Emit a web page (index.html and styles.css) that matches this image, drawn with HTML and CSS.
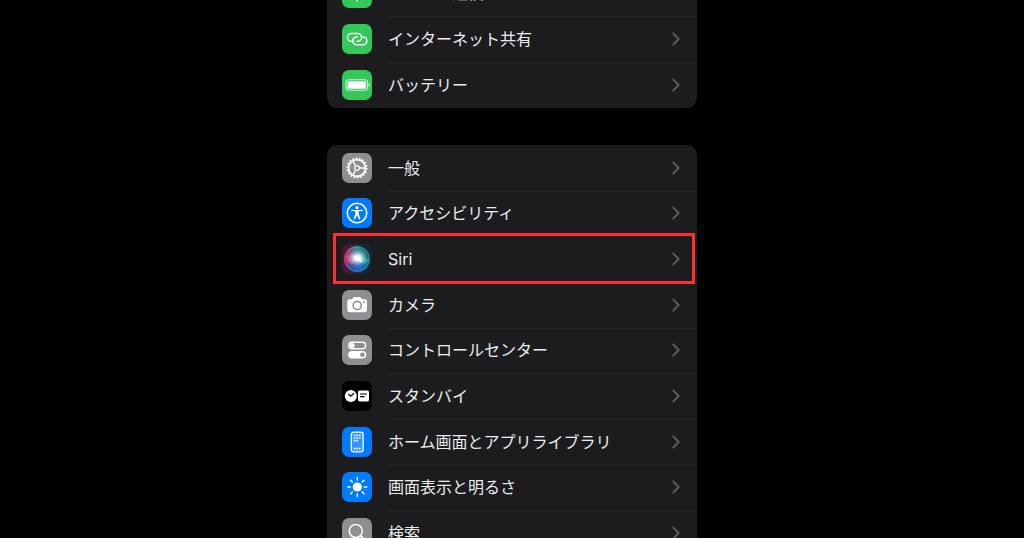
FILE: index.html
```
<!DOCTYPE html>
<html lang="ja">
<head>
  <meta charset="UTF-8" />
  <meta name="viewport" content="width=device-width, initial-scale=1" />
  <title>設定</title>
  <link rel="stylesheet" href="styles.css">
</head>
<body>
  <svg class="defs" width="0" height="0" aria-hidden="true">
    <symbol id="chevron" viewBox="0 0 8 14">
      <path d="M1.3 1.5 L6.7 7 L1.3 12.5" fill="none" stroke="currentColor" stroke-width="1.9" stroke-linecap="round" stroke-linejoin="round" />
    </symbol>
  </svg>

  <main class="settings">
    <ul class="group group-network">
      <li class="row">
        <a class="row-link" href="#cellular">
          <svg class="icon green" viewBox="0 0 30 30" aria-hidden="true">
            <g fill="none" stroke="#fff" stroke-width="1.6" stroke-linecap="round">
              <path d="M15 14 V23 M11 16 a5 5 0 1 1 8 0 M8.5 18.5 a8 8 0 1 1 13 0" />
            </g>
            <circle cx="15" cy="13" r="2" fill="#fff" />
          </svg>
          <span class="label">モバイル通信</span>
          <svg class="chevron" aria-hidden="true"><use href="#chevron" /></svg>
        </a>
      </li>
      <li class="row">
        <a class="row-link" href="#hotspot">
          <svg class="icon green" viewBox="0 0 30 30" aria-hidden="true">
            <g fill="none" stroke="#fff" stroke-width="1.5" stroke-linecap="round">
              <path d="M10.8 17.3 H9.3 A3.9 3.9 0 0 1 9.3 9.5 H15.6 A3.9 3.9 0 0 1 15.6 17.3 H15" />
              <path d="M19.4 12.9 H21 A3.9 3.9 0 0 1 21 20.7 H14.7 A3.9 3.9 0 0 1 14.7 12.9 H15.3" />
            </g>
          </svg>
          <span class="label">インターネット共有</span>
          <svg class="chevron" aria-hidden="true"><use href="#chevron" /></svg>
        </a>
      </li>
      <li class="row">
        <a class="row-link" href="#battery">
          <svg class="icon green" viewBox="0 0 30 30" aria-hidden="true">
            <rect x="4" y="9.7" width="21.5" height="10.6" rx="3" fill="none" stroke="#fff" stroke-opacity="0.75" stroke-width="1.1" />
            <rect x="5.6" y="11.2" width="18.3" height="7.6" rx="1.6" fill="#fff" />
            <path d="M26.7 13 V17 Q28 16.5 28 15 Q28 13.5 26.7 13Z" fill="#fff" fill-opacity="0.8" />
          </svg>
          <span class="label">バッテリー</span>
          <svg class="chevron" aria-hidden="true"><use href="#chevron" /></svg>
        </a>
      </li>
    </ul>

    <ul class="group group-system">
      <li class="row">
        <a class="row-link" href="#general">
          <svg class="icon gray" viewBox="0 0 30 30" aria-hidden="true">
            <g fill="none" stroke="#fff">
              <circle cx="15" cy="15" r="9.8" stroke-width="1.6" stroke-dasharray="1.7 1.721" />
              <circle cx="15" cy="15" r="8.4" stroke-width="1.7" />
              <circle cx="15" cy="15" r="2.3" stroke-width="1.2" />
              <path d="M17.3 15 H23.3 M13.8 13 L10.8 7.8 M13.8 17 L10.8 22.2" stroke-width="1.4" />
            </g>
          </svg>
          <span class="label">一般</span>
          <svg class="chevron" aria-hidden="true"><use href="#chevron" /></svg>
        </a>
      </li>
      <li class="row">
        <a class="row-link" href="#accessibility">
          <svg class="icon blue" viewBox="0 0 30 30" aria-hidden="true">
            <circle cx="15" cy="15" r="9.7" fill="none" stroke="#fff" stroke-width="1.6" />
            <circle cx="15" cy="9.7" r="1.6" fill="#fff" />
            <path d="M9.8 12.3 L15 12.9 L20.2 12.3" fill="none" stroke="#fff" stroke-width="1.3" stroke-linecap="round" />
            <path d="M13.4 12.5 H16.6 L16.7 15.8 L18.3 21 L17.2 21.4 L15 17.3 L12.8 21.4 L11.7 21 L13.3 15.8Z" fill="#fff" />
          </svg>
          <span class="label">アクセシビリティ</span>
          <svg class="chevron" aria-hidden="true"><use href="#chevron" /></svg>
        </a>
      </li>
      <li class="row highlighted">
        <a class="row-link" href="#siri">
          <svg class="icon siri" viewBox="0 0 30 30" aria-hidden="true">
            <defs>
              <linearGradient id="siri-bg" x1="0" y1="0" x2="1" y2="0">
                <stop offset="0" stop-color="#5c0f2e" />
                <stop offset="0.5" stop-color="#242442" />
                <stop offset="1" stop-color="#0c2730" />
              </linearGradient>
              <linearGradient id="siri-orb" x1="0" y1="0.6" x2="1" y2="0.4">
                <stop offset="0" stop-color="#b81d5c" />
                <stop offset="0.35" stop-color="#765c85" />
                <stop offset="0.6" stop-color="#2d8c8c" />
                <stop offset="1" stop-color="#12686e" />
              </linearGradient>
              <linearGradient id="siri-low" x1="0" y1="0" x2="0" y2="1">
                <stop offset="0.5" stop-color="#1758b8" stop-opacity="0" />
                <stop offset="1" stop-color="#1758b8" />
              </linearGradient>
              <radialGradient id="siri-glow">
                <stop offset="0" stop-color="#fff" />
                <stop offset="0.3" stop-color="#fff" stop-opacity="0.85" />
                <stop offset="1" stop-color="#9fe0e4" stop-opacity="0" />
              </radialGradient>
            </defs>
            <rect width="30" height="30" fill="url(#siri-bg)" />
            <circle cx="15" cy="15" r="13" fill="url(#siri-orb)" />
            <circle cx="15" cy="15" r="13" fill="url(#siri-low)" />
            <circle cx="15" cy="15" r="12.3" fill="none" stroke="#70bda8" stroke-opacity="0.35" />
            <path d="M4 12 Q10 8 15 15 Q11 22 5 18Z" fill="#f0508c" fill-opacity="0.6" />
            <path d="M15 15 Q21 11 27 16 Q22 24 15 15Z" fill="#35c7c0" fill-opacity="0.5" />
            <path d="M10 23 Q17 20 19 15 Q23 21 19 26Z" fill="#286eea" fill-opacity="0.6" />
            <ellipse cx="15.5" cy="14" rx="10" ry="8.5" fill="url(#siri-glow)" />
            <path d="M11 12 Q16 10 21 18 Q15 18 11 12Z" fill="#fff" />
          </svg>
          <span class="label">Siri</span>
          <svg class="chevron" aria-hidden="true"><use href="#chevron" /></svg>
        </a>
      </li>
      <li class="row">
        <a class="row-link" href="#camera">
          <svg class="icon gray" viewBox="0 0 30 30" aria-hidden="true">
            <path d="M7.5 9.2 H10 L11.3 7.5 Q11.7 7 12.5 7 H17.5 Q18.3 7 18.7 7.5 L20 9.2 H22.8 Q25 9.2 25 11.4 V20 Q25 22.2 22.8 22.2 H7.5 Q5.3 22.2 5.3 20 V11.4 Q5.3 9.2 7.5 9.2Z" fill="#fff" />
            <circle cx="15.2" cy="15.5" r="4.1" fill="none" stroke="#8e8e93" stroke-width="1.5" />
            <circle cx="22" cy="12.2" r="1" fill="#8e8e93" />
          </svg>
          <span class="label">カメラ</span>
          <svg class="chevron" aria-hidden="true"><use href="#chevron" /></svg>
        </a>
      </li>
      <li class="row">
        <a class="row-link" href="#control-center">
          <svg class="icon gray" viewBox="0 0 30 30" aria-hidden="true">
            <rect x="6.8" y="7.3" width="16.8" height="6.4" rx="3.2" fill="none" stroke="#fff" stroke-width="1.4" />
            <circle cx="10.2" cy="10.5" r="2.5" fill="#fff" />
            <rect x="6.1" y="16" width="18.2" height="7.6" rx="3.8" fill="#fff" />
            <circle cx="20.4" cy="19.8" r="2.3" fill="#8e8e93" />
          </svg>
          <span class="label">コントロールセンター</span>
          <svg class="chevron" aria-hidden="true"><use href="#chevron" /></svg>
        </a>
      </li>
      <li class="row">
        <a class="row-link" href="#standby">
          <svg class="icon black" viewBox="0 0 30 30" aria-hidden="true">
            <circle cx="8.8" cy="15" r="6" fill="#fff" />
            <path d="M6.3 13 L8.6 15.3 L12 12.3" fill="none" stroke="#000" stroke-width="1.2" />
            <rect x="16" y="9.5" width="11" height="11" rx="1.8" fill="#fff" />
            <path d="M18 13 H25 M18 15.6 H22.5" stroke="#000" stroke-width="1.2" />
          </svg>
          <span class="label">スタンバイ</span>
          <svg class="chevron" aria-hidden="true"><use href="#chevron" /></svg>
        </a>
      </li>
      <li class="row">
        <a class="row-link" href="#home-screen">
          <svg class="icon blue" viewBox="0 0 30 30" aria-hidden="true">
            <rect x="9.3" y="5.2" width="11.8" height="19.6" rx="2.4" fill="#fff" fill-opacity="0.2" stroke="#fff" stroke-width="1.3" />
            <g stroke="#fff" stroke-width="1.7" stroke-dasharray="1.7 0.9">
              <path d="M11.6 8.4 H18.8 M11.6 11 H18.8 M11.6 21.6 H18.8" />
              <path d="M11.6 13.6 H16" />
            </g>
          </svg>
          <span class="label">ホーム画面とアプリライブラリ</span>
          <svg class="chevron" aria-hidden="true"><use href="#chevron" /></svg>
        </a>
      </li>
      <li class="row">
        <a class="row-link" href="#display">
          <svg class="icon blue" viewBox="0 0 30 30" aria-hidden="true">
            <circle cx="15.3" cy="15" r="4.6" fill="#fff" />
            <path d="M15.3 5.5 V8 M15.3 22 V24.5 M5.8 15 H8.3 M22.3 15 H24.8 M8.6 8.3 L10.3 10 M20.3 20 L22 21.7 M8.6 21.7 L10.3 20 M20.3 10 L22 8.3" stroke="#fff" stroke-width="1.5" stroke-linecap="round" />
          </svg>
          <span class="label">画面表示と明るさ</span>
          <svg class="chevron" aria-hidden="true"><use href="#chevron" /></svg>
        </a>
      </li>
      <li class="row">
        <a class="row-link" href="#search">
          <svg class="icon gray" viewBox="0 0 30 30" aria-hidden="true">
            <circle cx="13.8" cy="13" r="6.5" fill="none" stroke="#fff" stroke-width="1.5" />
            <path d="M18.5 17.7 L23.5 22.7" stroke="#fff" stroke-width="1.8" stroke-linecap="round" />
          </svg>
          <span class="label">検索</span>
          <svg class="chevron" aria-hidden="true"><use href="#chevron" /></svg>
        </a>
      </li>
    </ul>
  </main>
</body>
</html>
```
FILE: styles.css
```
/* the list is shown part way down its scroll */
html,
body {
  height: 100%;
  overflow: hidden;
}
body {
  margin: 0;
  background-color: #000000;
  color: #ececec;
  font-family: Inter, "Noto Sans CJK JP", sans-serif;
  font-size: 16px;
  line-height: 24px;
}
.defs {
  display: none;
}
.settings {
  max-width: 370px;
  margin: 0 auto;
}
.group {
  display: grid;
  grid-auto-rows: 1fr;
  margin: 0 0 37px;
  padding: 0;
  list-style: none;
  background-color: #1c1c1e;
  border-radius: 10px;
}
.group-network {
  margin-top: -30px;
}
.group-system {
  min-height: 411px;
}
.row {
  position: relative;
  display: flex;
}
.row-link {
  flex: 1;
  display: flex;
  align-items: center;
  gap: 16px;
  padding: 8px 17px 8px 15px;
  color: inherit;
  text-decoration: none;
}
.group-system .row-link {
  padding-top: 7px;
  padding-bottom: 7px;
}
.row + .row::before {
  content: "";
  position: absolute;
  top: 0;
  left: 61px;
  right: 0;
  height: 1px;
  background-color: #272729;
}
.icon {
  flex: none;
  width: 30px;
  height: 30px;
  border-radius: 7px;
}
.green {
  background-color: #34c759;
}
.gray {
  background-color: #8e8e93;
}
.blue {
  background-color: #007aff;
}
.black {
  background-color: #000000;
}
.label {
  flex: 1;
  white-space: nowrap;
}
.chevron {
  flex: none;
  width: 8px;
  height: 14px;
  color: #5c5c60;
}
.highlighted {
  z-index: 1;
}
.highlighted::after {
  content: "";
  position: absolute;
  top: -3px;
  right: 2px;
  bottom: -2px;
  left: 6px;
  border: 3px solid #fb3131;
  pointer-events: none;
}
```
